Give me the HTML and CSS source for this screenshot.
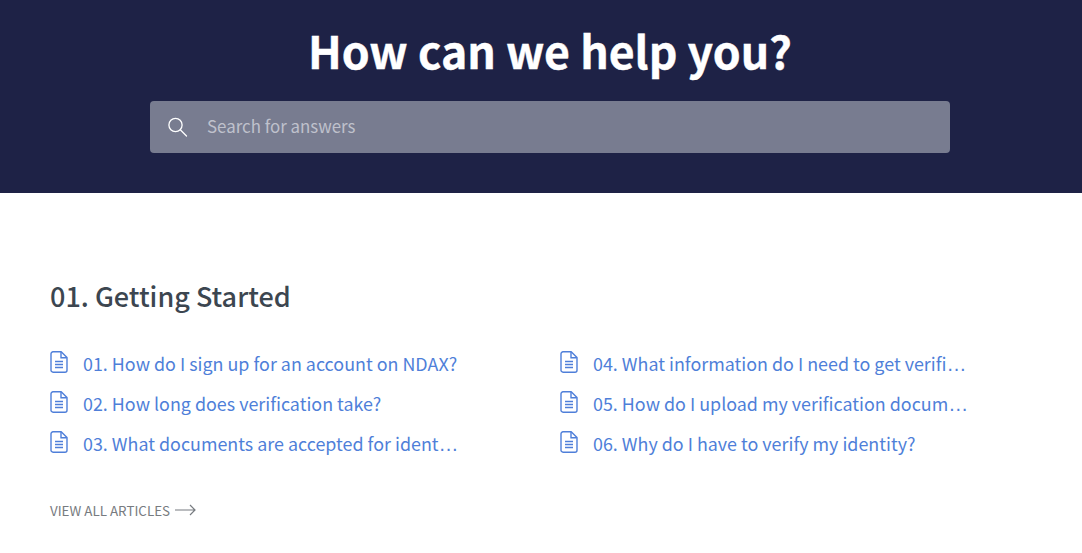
FILE: index.html
```html
<!DOCTYPE html>
<html lang="en">
<head>
    <meta charset="UTF-8">
    <meta name="viewport" content="width=device-width, initial-scale=1.0">
    <title>Help Center</title>
    <link rel="stylesheet" href="styles.css">
</head>
<body>
    <header class="hero">
        <h1>How can we help you?</h1>
        <form class="search-box">
            <svg class="search-icon" width="20" height="20" viewBox="0 0 20 20" fill="none" stroke="currentColor" stroke-width="1.3">
                <circle cx="7.500" cy="8" r="6.600"/>
                <path d="M12.300 12.800l6.200 6.200" stroke-linecap="round"/>
            </svg>
            <input type="text" class="search-input" placeholder="Search for answers">
        </form>
    </header>

    <main class="section">
        <h2>01. Getting Started</h2>
        <div class="article-grid">
            <a href="#" class="article">
                <svg class="doc-icon" width="18" height="22" viewBox="0 0 18 22"><use href="#doc"/></svg>
                <span class="article-title">01. How do I sign up for an account on NDAX?</span>
            </a>
            <a href="#" class="article">
                <svg class="doc-icon" width="18" height="22" viewBox="0 0 18 22"><use href="#doc"/></svg>
                <span class="article-title">04. What information do I need to get verifi<span class="dots">…</span></span>
            </a>
            <a href="#" class="article">
                <svg class="doc-icon" width="18" height="22" viewBox="0 0 18 22"><use href="#doc"/></svg>
                <span class="article-title">02. How long does verification take?</span>
            </a>
            <a href="#" class="article">
                <svg class="doc-icon" width="18" height="22" viewBox="0 0 18 22"><use href="#doc"/></svg>
                <span class="article-title">05. How do I upload my verification docum<span class="dots">…</span></span>
            </a>
            <a href="#" class="article">
                <svg class="doc-icon" width="18" height="22" viewBox="0 0 18 22"><use href="#doc"/></svg>
                <span class="article-title">03. What documents are accepted for ident<span class="dots">…</span></span>
            </a>
            <a href="#" class="article">
                <svg class="doc-icon" width="18" height="22" viewBox="0 0 18 22"><use href="#doc"/></svg>
                <span class="article-title">06. Why do I have to verify my identity?</span>
            </a>
        </div>
        <a href="#" class="view-all">
            VIEW ALL ARTICLES
            <svg width="21" height="12" viewBox="0 0 21 12" fill="none" stroke="currentColor" stroke-width="1.2">
                <path d="M0 6h20M15 1l5 5-5 5"/>
            </svg>
        </a>
    </main>

    <!-- shared document icon -->
    <svg class="sprite" width="0" height="0">
        <symbol id="doc" viewBox="0 0 18 22">
            <path d="M3 .8h8.200L17 6.500v12.700a2 2 0 0 1-2 2H3a2 2 0 0 1-2-2V2.800a2 2 0 0 1 2-2z" fill="none" stroke="currentColor" stroke-width="1.400" stroke-linejoin="round"/>
            <path d="M11 1v5.800h5.800" fill="none" stroke="currentColor" stroke-width="1.400"/>
            <path d="M5 10.500h8M5 13.500h8M5 16.500h8" fill="none" stroke="currentColor" stroke-width="1.400"/>
        </symbol>
    </svg>
</body>
</html>
```

FILE: styles.css
```css
body {
    font-family: "Noto Sans CJK KR", "Noto Sans", sans-serif;
    background-color: #fff;
    margin: 0;
}
.hero {
    background-color: #1e2246;
    height: 193px;
    box-sizing: border-box;
    padding: 21px 0 0 18px;
    display: flex;
    flex-direction: column;
    align-items: center;
}
.hero h1 {
    margin: 0;
    color: #fff;
    font-size: 44.6px;
    line-height: 58px;
    font-weight: 700;
    -webkit-text-stroke: 0.4px #fff;
}
.search-box {
    width: 800px;
    height: 52px;
    margin-top: 22px;
    padding-left: 18px;
    box-sizing: border-box;
    display: flex;
    align-items: center;
    gap: 19px;
    background-color: #787c90;
    border-radius: 4px;
    color: #fff;
}
.search-input {
    flex: 1;
    border: none;
    outline: none;
    background: none;
    padding: 0 0 3px;
    font-family: inherit;
    font-size: 16.9px;
    color: #fff;
}
.search-input::placeholder {
    color: #bfc1cc;
}
.section {
    padding: 84px 50px 0;
}
.section h2 {
    margin: 0;
    color: #3c4650;
    font-size: 27px;
    line-height: 38px;
    font-weight: 500;
}
.article-grid {
    margin-top: 28px;
    display: grid;
    grid-template-columns: 510px 408px;
    grid-auto-rows: 40px;
}
.article {
    display: flex;
    align-items: center;
    gap: 15px;
    min-width: 0;
    color: #4f7fd9;
    text-decoration: none;
    font-size: 17.9px;
}
.doc-icon {
    flex: none;
    margin-bottom: 2px;
    color: #4f7fd9;
}
.article-title {
    white-space: nowrap;
}
.dots {
    font-family: "Liberation Sans", sans-serif;
    font-size: 20px;
    line-height: 1;
}
.view-all {
    margin-top: 37px;
    display: flex;
    align-items: center;
    gap: 5px;
    color: #777b80;
    text-decoration: none;
    font-size: 13.4px;
}
.sprite {
    position: absolute;
}
```
